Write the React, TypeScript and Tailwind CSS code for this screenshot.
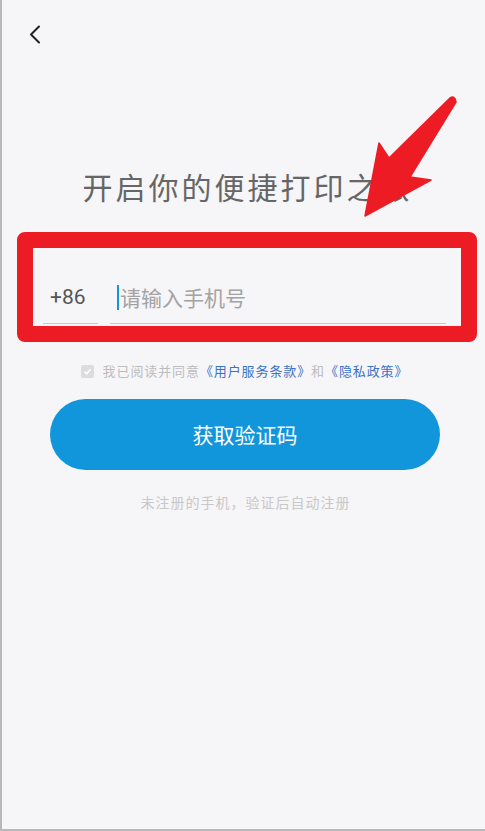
import React from "react";

const cjk = { fontFamily: '"Noto Sans CJK SC", "Noto Sans", sans-serif' };

export default function App() {
  return (
    <div
      className="relative w-[485px] h-[831px] overflow-hidden bg-[#f6f5f8] border-l-2 border-b-2 border-[#b8b8b8] flex flex-col"
      style={cjk}
    >
      {/* back chevron */}
      <div className="pt-[25px] pl-[26px]">
        <svg width="13" height="19" viewBox="0 0 13 19" className="block">
          <path d="M11 1.5 L3 9.5 L11 17.5" fill="none" stroke="#222" strokeWidth="2" strokeLinecap="round" strokeLinejoin="round" />
        </svg>
      </div>

      {/* title */}
      <div className="mt-[126px] h-[32px] leading-[32px] text-center pl-[8px] text-[30px] tracking-[3px] text-[#666666]">
        开启你的便捷打印之旅
      </div>

      {/* phone input */}
      <div className="mt-[70px] flex pl-[41px] pr-[39px] gap-[12px]">
        <div className="w-[55px] h-[52px] border-b border-[#c9c9c9] flex items-center pl-[7px] text-[21px] text-[#555555]" style={{ fontFamily: 'Roboto, "Noto Sans", sans-serif' }}>
          +86
        </div>
        <div className="flex-1 h-[52px] border-b border-[#c9c9c9] flex items-center pl-[7px]">
          <span className="w-[2px] h-[25px] bg-[#1296db] mr-[1px]" />
          <span className="text-[21px] text-[#a3a3a3]">请输入手机号</span>
        </div>
      </div>

      {/* agreement */}
      <div className="mt-[37px] h-[20px] flex items-center justify-center pl-[2px] text-[13px] tracking-[0.9px]">
        <span className="w-[13px] h-[13px] bg-[#dcdcdc] rounded-[2px] flex items-center justify-center mr-[9px]">
          <svg width="9" height="9" viewBox="0 0 9 9">
            <path d="M1.5 4.8 L3.6 6.8 L7.6 2.2" fill="none" stroke="#ffffff" strokeWidth="1.5" />
          </svg>
        </span>
        <span className="text-[#bdbdbd]">我已阅读并同意</span>
        <span className="text-[#3a74c6]">《用户服务条款》</span>
        <span className="text-[#bdbdbd]">和</span>
        <span className="text-[#3a74c6]">《隐私政策》</span>
      </div>

      {/* button */}
      <div className="mt-[18px] ml-[48px] w-[390px] h-[71px] rounded-full bg-[#1296db] flex items-center justify-center text-white text-[21px]">
        获取验证码
      </div>

      {/* hint */}
      <div className="mt-[22px] h-[20px] leading-[20px] text-center pl-[4px] text-[14px] tracking-[1px] text-[#c8c8c8]">
        未注册的手机，验证后自动注册
      </div>

      {/* red annotation frame */}
      <div className="absolute left-[15px] top-[232px] w-[460px] h-[110px] border-[16px] border-[#ed1c24] rounded-[8px] pointer-events-none" />

      {/* red annotation arrow */}
      <svg className="absolute left-[353px] top-[90px] pointer-events-none" width="110" height="135" viewBox="0 0 110 135">
        <path
          d="M95 8 Q100 5 101 12 L55 87 L76 90 L10 126 L24 53 L34 68 Z"
          fill="#ed1c24"
          stroke="#ed1c24"
          strokeWidth="1.5"
          strokeLinejoin="round"
        />
      </svg>
    </div>
  );
}
